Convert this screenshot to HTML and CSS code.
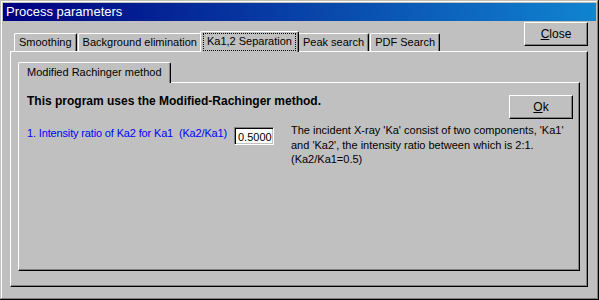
FILE: index.html
```html
<!DOCTYPE html>
<html lang="en">
<head>
  <meta charset="UTF-8">
  <title>Process parameters</title>
  <link rel="stylesheet" href="styles.css">
</head>
<body>
  <div class="window">
    <div class="titlebar">Process parameters</div>
    <div class="client">
      <div class="topbar">
        <div class="tabs">
          <div class="tab">Smoothing</div>
          <div class="tab">Background elimination</div>
          <div class="tab selected"><span class="focus">Ka1,2 Separation</span></div>
          <div class="tab">Peak search</div>
          <div class="tab">PDF Search</div>
        </div>
        <button class="btn btn-close"><u>C</u>lose</button>
      </div>

      <div class="panel outer">
        <div class="tabctl">
          <div class="tabs">
            <div class="tab selected first">Modified Rachinger method</div>
          </div>
          <div class="panel inner">
            <div class="head-row">
              <div class="heading">This program uses the Modified-Rachinger method.</div>
              <button class="btn btn-ok"><u>O</u>k</button>
            </div>
            <div class="param-row">
              <label class="param-label" for="ratio">1. Intensity ratio of Ka2 for Ka1&nbsp; (Ka2/Ka1)</label>
              <input class="field" id="ratio" type="text" value="0.5000">
              <div class="desc">
                The incident X-ray 'Ka' consist of two components, 'Ka1'<br>
                and 'Ka2', the intensity ratio between which is 2:1.<br>
                (Ka2/Ka1=0.5)
              </div>
            </div>
          </div>
        </div>
      </div>
    </div>
  </div>
</body>
</html>
```

FILE: styles.css
```css
body {
  margin: 0;
  background: #c0c0c0;
  font-family: "Liberation Sans", Arial, sans-serif;
  font-size: 11px;
  color: #000;
}
.window {
  width: 599px;
  height: 300px;
  box-sizing: border-box;
  padding: 3px;
  background: #c0c0c0;
  box-shadow: inset -1px -1px #000, inset 1px 1px #c0c0c0,
              inset -2px -2px #808080, inset 2px 2px #fff;
  display: flex;
  flex-direction: column;
}
.titlebar {
  height: 18px;
  line-height: 18px;
  padding-left: 3px;
  font-size: 13px;
  color: #fff;
  background: linear-gradient(to right, #000080, #1084d0);
}
.client {
  flex: 1;
  display: flex;
  flex-direction: column;
  padding: 0 8px 10px 7px;
}
.topbar {
  height: 30px;
  display: flex;
  justify-content: space-between;
  align-items: flex-end;
}
.tabs {
  display: flex;
  align-items: flex-end;
  padding-left: 4px;
  position: relative;
  z-index: 1;
}
.tab {
  height: 18px;
  line-height: 17px;
  box-sizing: border-box;
  padding: 0 4px;
  border: 1px solid #fff;
  border-right-color: #000;
  border-bottom: 0;
  border-radius: 2px 2px 0 0;
  box-shadow: inset -1px 0 #808080;
  white-space: nowrap;
}
.tab + .tab {
  margin-left: 1px;
}
.tab.selected {
  height: 21px;
  line-height: 19px;
  margin: 0 -2px -1px;
  padding: 0 3px;
  background: #c0c0c0;
  position: relative;
}
.tab.first {
  margin-left: -2px;
  padding: 0 8px;
}
.focus {
  display: inline-block;
  line-height: 15px;
  padding: 0 3px 1px;
  outline: 1px dotted #000;
  margin-top: 1px;
}
.btn {
  width: 64px;
  height: 24px;
  box-sizing: border-box;
  padding: 0;
  font-family: inherit;
  font-size: 12px;
  color: #000;
  background: #c0c0c0;
  border: 1px solid;
  border-color: #fff #000 #000 #fff;
  box-shadow: inset -1px -1px #808080;
}
.btn-close {
  margin-bottom: 5px;
}
.panel {
  border: 1px solid;
  border-color: #fff #000 #000 #fff;
  box-shadow: inset -1px -1px #808080;
}
.outer {
  flex: 1;
  display: flex;
  padding: 10px 7px 15px 7px;
}
.tabctl {
  flex: 1;
  display: flex;
  flex-direction: column;
}
.tabctl .tabs {
  padding-left: 2px;
}
.inner {
  flex: 1;
  padding: 11px 6px 0 8px;
}
.head-row {
  display: flex;
  justify-content: space-between;
  align-items: flex-start;
}
.heading {
  font-size: 12px;
  font-weight: bold;
  line-height: 14px;
}
.btn-ok {
  margin-top: 1px;
}
.param-row {
  display: flex;
  align-items: flex-start;
  margin-top: 8px;
}
.param-label {
  color: #0000ff;
  line-height: 14px;
  margin-top: -1px;
  width: 207px;
  letter-spacing: -0.15px;
  white-space: nowrap;
}
.field {
  width: 40px;
  height: 18px;
  box-sizing: border-box;
  padding: 2px 0 0 3px;
  font-family: inherit;
  font-size: 11px;
  border: 1px solid;
  border-color: #808080 #fff #fff #808080;
  box-shadow: inset 1px 1px #000, inset -1px -1px #c0c0c0;
  background: #fff;
  outline: none;
}
.desc {
  margin-left: 17px;
  margin-top: -4px;
  line-height: 14.5px;
  white-space: nowrap;
}
```
